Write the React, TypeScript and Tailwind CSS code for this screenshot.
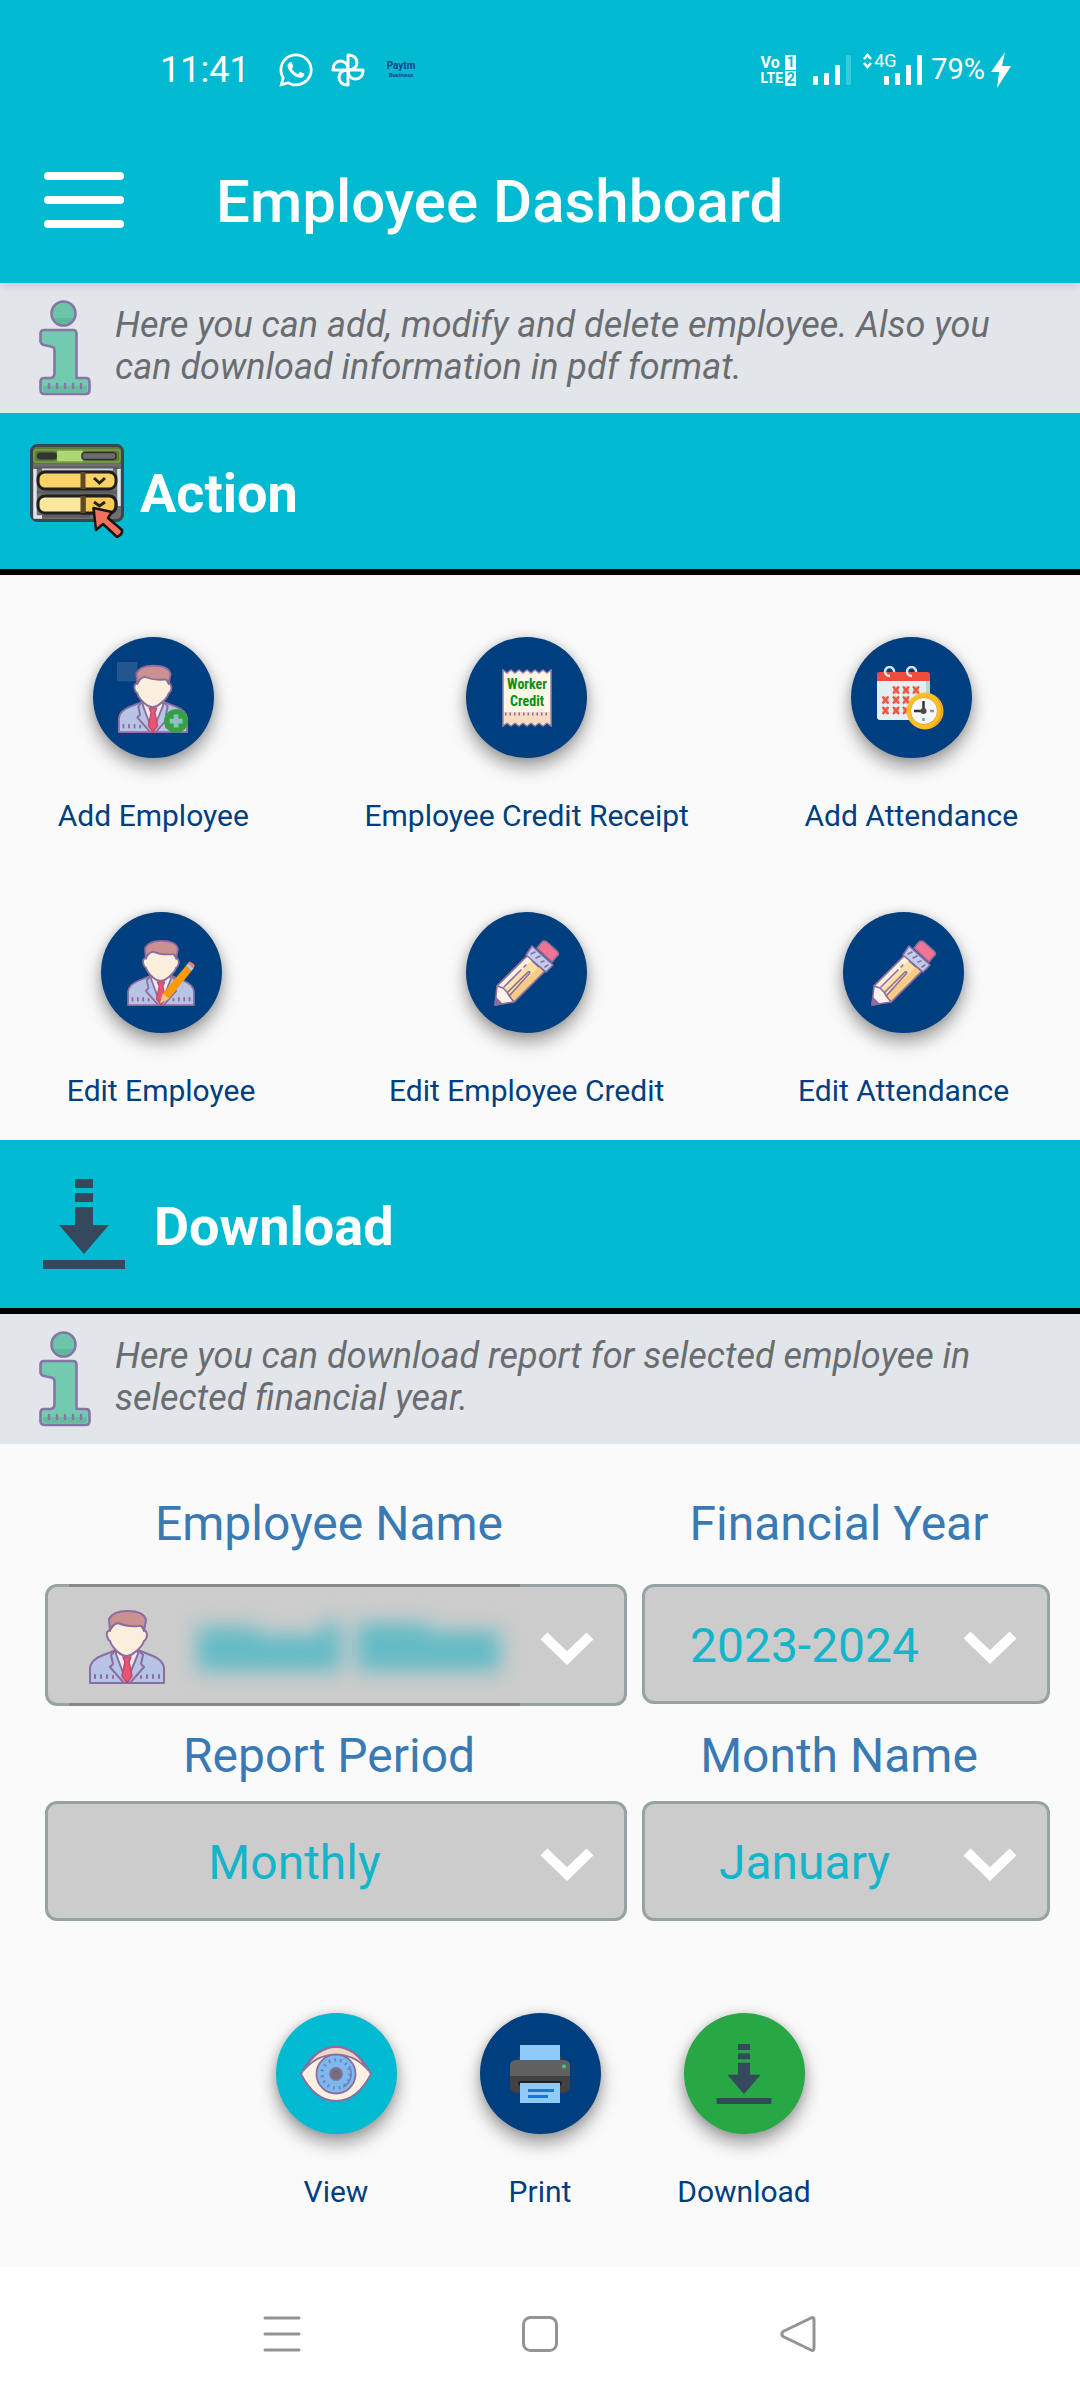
import type { ReactNode } from "react";
import { FaWhatsapp } from "react-icons/fa";

function PinwheelIcon() {
  return (
    <svg viewBox="0 0 34 34" className="size-[34px]" fill="none" stroke="#fff" strokeWidth="3" strokeLinejoin="round">
      {[0, 90, 180, 270].map((angle) => (
        <path key={angle} d="M17 2 H18 A8 7.5 0 0 1 18 17 H17 Z" transform={`rotate(${angle} 17 17)`} />
      ))}
    </svg>
  );
}

function BoltIcon() {
  return (
    <svg viewBox="0 0 20 36" className="h-9 w-5" fill="#fff">
      <path d="M14 0 L0 20 H8 L6 36 L20 14 H11 Z" />
    </svg>
  );
}

function SignalIcon({ faded }: { faded?: boolean }) {
  return (
    <svg viewBox="0 0 40 30" className="h-[30px] w-10" fill="#fff">
      <rect x="1" y="21" width="5" height="9" rx="1" />
      <rect x="12" y="18" width="5" height="12" rx="1" />
      <rect x="23" y="10" width="5" height="20" rx="1" />
      <rect x="34" y="0" width="5" height="30" rx="1" opacity={faded ? 0.22 : 1} />
    </svg>
  );
}

function InfoIcon() {
  return (
    <svg viewBox="0 0 52 96" className="h-24 w-[52px] shrink-0" stroke="#8676a4" strokeWidth="2.6" strokeLinejoin="round">
      <circle cx="24.5" cy="13.5" r="12" fill="#6cc5aa" />
      <path d="M15 18 A11 11 0 0 0 34 18 Z" fill="#5bb898" stroke="none" />
      <path
        d="M5 30 H34 Q37.500 30 37.500 34 V78 H47 Q50.500 78 50.500 82 V90 Q50.500 94 47 94 H5 Q1.500 94 1.500 90 V82 Q1.500 78 5 78 H11 Q15.500 78 15.500 73 V50 Q15.500 47 12 46.500 L5 45 Q1.500 44 1.500 41 V34 Q1.500 30 5 30 Z"
        fill="#72cbb0"
      />
      <path d="M4 86 H48 V89 Q48 92 45 92 H7 Q4 92 4 89 Z" fill="#62bd9f" stroke="none" />
      <path d="M10 84 V88 M18 84 V88 M26 84 V88 M34 84 V88 M42 84 V88" strokeWidth="2.500" strokeLinecap="round" />
    </svg>
  );
}

function ActionIcon() {
  return (
    <svg viewBox="0 0 95 94" className="h-[94px] w-[95px] shrink-0">
      <rect x="1.500" y="1.500" width="91" height="75" rx="6" fill="#6f6f6f" stroke="#37474a" strokeWidth="3" />
      <path d="M3 20 V7 Q3 3 7 3 H87 Q91 3 91 7 V20 H3 Z" fill="#5f7b3a" />
      <rect x="27" y="6" width="26" height="12" fill="#aed672" />
      <rect x="4" y="6" width="86" height="12" rx="3" fill="none" stroke="#7da04c" strokeWidth="1.500" />
      <rect x="7" y="8.500" width="20" height="7" rx="3" fill="#333" />
      <rect x="52" y="8.500" width="34" height="7" rx="3" fill="#6c6c6c" stroke="#333" strokeWidth="1.500" />
      <path d="M5 24 H89 M5 48 H89 M5 72 H60" stroke="#5c5c5c" strokeWidth="3" />
      <path d="M5 25 V73 H12 M89 25 V62" fill="none" stroke="#dfe3f2" strokeWidth="3.500" />
      <path d="M12 25.500 H83" stroke="#cfd3df" strokeWidth="2" />
      <g stroke="#1f1f1f" strokeWidth="3">
        <rect x="8" y="28" width="78" height="17" rx="7" fill="#fbd266" />
        <rect x="8" y="52" width="78" height="17" rx="7" fill="#fce69c" />
        <path d="M54 52 H79 Q86 52 86 60 Q86 69 79 69 H54 Z" fill="#f8cb58" />
      </g>
      <path d="M53 28 V45 M53 52 V69" stroke="#5d4b23" strokeWidth="5" />
      <path d="M64 34 L69.500 39 L75 34 M64 58 L69.500 62 L75 58" fill="none" stroke="#2c2410" strokeWidth="3" />
      <path
        d="M63.500 64 L82 68 L78 74 L92 86 Q93 90 87 93 L73 80 L66 86 Z"
        fill="#f2705c"
        stroke="#151515"
        strokeWidth="2.500"
        strokeLinejoin="round"
      />
    </svg>
  );
}

function DownloadIcon({ className }: { className: string }) {
  return (
    <svg viewBox="0 0 84 90" className={className} fill="#34495e">
      <rect x="33" y="0" width="18" height="9" />
      <rect x="33" y="14" width="18" height="9" />
      <path d="M33 28 H51 V46 H67 L42 75 L17 46 H33 Z" />
      <rect x="1" y="81" width="82" height="9" />
    </svg>
  );
}

function PersonArt() {
  return (
    <g stroke="#8b6d9f" strokeWidth="2" strokeLinejoin="round" strokeLinecap="round">
      <path d="M1 73 V58 Q2 50 12 46 L27 40 H49 L64 46 Q74 50 75 58 V73 Z" fill="#b7c4e6" />
      <path d="M28 38 L27 44 L37.500 72 L49 44 L48 38 Z" fill="#f4eaf0" />
      <path d="M34 47 H42 L40 52 L43 66 L38 73 L33 66 L36 52 Z" fill="#ea5573" stroke="#c2486d" strokeWidth="1.500" />
      <path d="M27 40 L22 45 L24 54 L21 57 L35 73 M49 40 L54 45 L52 54 L55 57 L41 73" fill="none" />
      <path d="M21 20 Q17 21 18 26 Q19 30 21 31 Q23 37 29 42 Q37.500 50 46 42 Q53 37 55 31 Q57 30 58 26 Q58 21 55 20 L50 13 H26 Z" fill="#fbeedd" />
      <path d="M21 21 L20 9 Q24 1 38 1 Q55 1 57 10 L55 21 Q54 15 50 16 Q38 17 29 13 Q22 15 21 21 Z" fill="#cb9191" />
      <path d="M6 65 V68 M12 65 V68 M18 65 V68 M24 66 V68 M52 66 V68 M58 65 V68 M64 65 V68 M70 65 V68" fill="none" />
    </g>
  );
}

function PersonIcon() {
  return (
    <svg viewBox="0 0 76 74" className="h-[74px] w-[76px]">
      <PersonArt />
    </svg>
  );
}

function AddPersonIcon() {
  return (
    <svg viewBox="0 0 78 78" className="size-[72px]">
      <rect x="0" y="0" width="22" height="21" fill="#235591" />
      <g transform="translate(1 3)">
        <PersonArt />
      </g>
      <circle cx="64" cy="64" r="13" fill="#36a047" />
      <path d="M64 57 V71 M57 64 H71" stroke="#8fc0c0" strokeWidth="5" />
    </svg>
  );
}

function EditPersonIcon() {
  return (
    <svg viewBox="0 0 76 74" className="h-[66px] w-[68px]">
      <PersonArt />
      <path d="M37 71 L40 60 L66 29 L72 35 L47 66 Z" fill="#fb9a0b" />
      <path d="M37 71 L40 60 L47 66 Z" fill="#f4c48a" />
      <path d="M66 29 L69 25.500 L75 31 L72 35 Z" fill="#b9ccd4" />
      <path d="M68 26 L70 24 Q75 26 76 29 L74 32 Z" fill="#ea8372" />
    </svg>
  );
}

function ReceiptIcon() {
  return (
    <svg viewBox="0 0 50 58" className="h-[58px] w-[50px]">
      <path
        d="M1 1 L5 4 L9 1 L13 4 L17 1 L21 4 L25 1 L29 4 L33 1 L37 4 L41 1 L45 4 L49 1 V57 L45 54 L41 57 L37 54 L33 57 L29 54 L25 57 L21 54 L17 57 L13 54 L9 57 L5 54 L1 57 Z"
        fill="#fdf5e6"
        stroke="#a07fa8"
        strokeWidth="1.500"
      />
      <path d="M2 43 H48 V55 L45 53 L41 56 L37 53 L33 56 L29 53 L25 56 L21 53 L17 56 L13 53 L9 56 L5 53 L2 55 Z" fill="#f6dcc3" />
      <path d="M3 45 H48" stroke="#8b6d9f" strokeWidth="3" strokeDasharray="1.5 3" />
      <g fill="#0b8f12" fontFamily="'Roboto Condensed', 'Liberation Sans Narrow', Roboto, sans-serif" fontWeight="700" fontSize="14" textAnchor="middle">
        <text x="25" y="20">Worker</text>
        <text x="25" y="37">Credit</text>
      </g>
    </svg>
  );
}

const CALENDAR_MARKS = [
  [19, 24], [29, 24], [39, 24],
  [8.5, 34], [19, 34], [29, 34],
  [8.5, 44.5], [19, 44.5], [29, 44.5],
];

function CalendarIcon() {
  return (
    <svg viewBox="0 0 68 64" className="h-16 w-[68px]">
      <rect x="0" y="7" width="53" height="47" rx="3" fill="#e3eff0" />
      <path d="M49 14 H53 V40 H49 Z" fill="#bcd3da" />
      <path d="M0 15 V9 Q0 6 3 6 H50 Q53 6 53 9 V15 Z" fill="#ee4d3b" />
      <path d="M13 10 A4.500 4.500 0 1 1 17 6 M35 10 A4.500 4.500 0 1 1 39 6" fill="none" stroke="#d5e3ea" strokeWidth="2.500" />
      {CALENDAR_MARKS.map(([x, y]) => (
        <g key={`${x}-${y}`}>
          <rect x={x - 3} y={y - 3.5} width="6" height="7" fill="#f4a79c" />
          <path d={`M${x - 3} ${y - 3.5} l6 7 m0 -7 l-6 7`} stroke="#ea5546" strokeWidth="2" />
        </g>
      ))}
      <circle cx="48" cy="45" r="18.500" fill="#fcc026" />
      <path d="M57 29 A18.500 18.500 0 0 1 50 63 A20 20 0 0 0 57 29 Z" fill="#f39a1e" />
      <circle cx="47" cy="45" r="13.500" fill="#f5f8fa" stroke="#f0a51f" strokeWidth="1" />
      <path d="M46.500 35 V45 H37" fill="none" stroke="#33363b" strokeWidth="2.500" />
      <circle cx="46.500" cy="45" r="3" fill="#4a4a48" />
      <path d="M53 45 H57 M46.500 52 V55" stroke="#8b9499" strokeWidth="2.500" />
    </svg>
  );
}

function PencilIcon() {
  return (
    <svg viewBox="0 0 66 66" className="size-[66px]" stroke="#8b6d9f" strokeWidth="1.600" strokeLinejoin="round" strokeLinecap="round">
      <path d="M3 46 L33 16 L50 32 L20 62 Z" fill="#fbe0a4" />
      <path d="M3 46 L33 16 L38 20 L9 51 Z" fill="#fdf0dc" stroke="none" />
      <path d="M14 57 L45 27 L50 32 L20 62 Z" fill="#f7cb85" stroke="none" />
      <path d="M3 46 L33 16 M20 62 L50 32" fill="none" />
      <path d="M3 46 L9 48 L13 52 L16 57 L20 62 L1 65 Z" fill="#fdf3ea" />
      <path d="M1 65 L2 58 L8 64 Z" fill="#8b6d9f" />
      <path d="M10 47 L27 30 M30 27 L32 25 M14 52 L34 32 Q37 31 35 34 L16 55" fill="none" />
      <path d="M32 15 L38 6 L59 25 L52 32 Z" fill="#c1cdee" />
      <path d="M37 14 L41 12 M42 18 L46 16 M47 22 L50 21 M51 27 L54 25" fill="none" />
      <path d="M43 8 L48 2 Q50 0 53 2 L63 11 Q66 14 63 16 L58 22 Z" fill="#f07493" />
    </svg>
  );
}

function EyeIcon() {
  return (
    <svg viewBox="0 0 72 56" className="h-14 w-[72px]" stroke="#8b6d9f" strokeWidth="1.800" strokeLinejoin="round">
      <path d="M1 28 Q15 1 36 1 Q57 1 71 28 Q57 55 36 55 Q15 55 1 28 Z" fill="#fbf0e2" />
      <path d="M4 24 Q17 1 36 1 Q55 1 68 24 Q54 8 36 9 Q18 8 4 24 Z" fill="#eed6c4" />
      <circle cx="36" cy="28" r="19.500" fill="#7db8ee" />
      <circle cx="36" cy="28" r="14" fill="none" stroke="#6c86bd" strokeWidth="3.500" strokeDasharray="1.800 4" />
      <path d="M49 20 A15 15 0 0 1 43 41" fill="none" stroke="#7583b9" />
      <circle cx="36" cy="28" r="6" fill="#6f6f77" />
    </svg>
  );
}

function PrinterIcon() {
  return (
    <svg viewBox="0 0 60 58" className="h-[58px] w-[60px]">
      <rect x="8" y="11" width="44" height="8" rx="2" fill="#424242" />
      <rect x="10" y="0" width="40" height="16" fill="#90caf9" />
      <rect x="0" y="15" width="60" height="33" rx="6" fill="#424242" />
      <path d="M0 31 V21 Q0 15 6 15 H54 Q60 15 60 21 V31 Z" fill="#616161" />
      <rect x="8" y="36" width="44" height="5" rx="2" fill="#212121" />
      <circle cx="54" cy="21.500" r="2" fill="#3ecb7c" />
      <rect x="10" y="38" width="40" height="20" fill="#90caf9" />
      <path d="M18 45.500 H44 M18 51.500 H38" stroke="#1976d2" strokeWidth="3" />
    </svg>
  );
}

function ChevronIcon() {
  return (
    <svg
      viewBox="0 0 56 34"
      className="pointer-events-none absolute inset-y-0 right-8 mt-1 h-full w-14"
      fill="none"
      stroke="#fff"
      strokeWidth="10"
    >
      <path d="M5 4 L28 26 L51 4" />
    </svg>
  );
}

function StatusBar() {
  return (
    <div className="flex h-[116px] items-center justify-between pl-40 pr-[69px] pt-6 text-white">
      <div className="flex items-center">
        <span className="w-[117px] text-4xl">11:41</span>
        <FaWhatsapp className="size-[38px]" />
        <span className="ml-4">
          <PinwheelIcon />
        </span>
        <span className="ml-[22px] flex w-7 flex-col items-center font-bold text-[#17418a]">
          <span className="text-[10px] leading-[10px]">Paytm</span>
          <span className="text-[6px] leading-[8px]">Business</span>
        </span>
      </div>
      <div className="flex items-center">
        <span className="grid grid-cols-[auto_11px] items-center gap-x-0.5 gap-y-px text-base font-bold leading-[15px]">
          <span>Vo</span>
          <span className="bg-white text-center text-sm leading-[15px] text-[#00bad1]">1</span>
          <span className="text-sm leading-[15px]">LTE</span>
          <span className="bg-white text-center text-sm leading-[15px] text-[#00bad1]">2</span>
        </span>
        <span className="ml-4">
          <SignalIcon faded />
        </span>
        <span className="relative ml-[31px]">
          <SignalIcon />
          <span className="absolute -left-5 -top-1 flex items-center gap-0.5 text-lg leading-5">
            <svg viewBox="0 0 9 16" className="h-4 w-[9px]" fill="none" stroke="#fff" strokeWidth="2.500">
              <path d="M1 6 L4.500 2 L8 6 M1 10 L4.500 14 L8 10" />
            </svg>
            4G
          </span>
        </span>
        <span className="ml-2 text-[29px]">79%</span>
        <span className="ml-1.5">
          <BoltIcon />
        </span>
      </div>
    </div>
  );
}

function InfoBanner({ children }: { children: ReactNode }) {
  return (
    <div className="flex min-h-[130px] items-center gap-6 bg-[#e2e5ea] pl-[39px] pr-10">
      <InfoIcon />
      <p className="pb-1 text-4xl leading-[42px] text-[#6a6d70] italic">{children}</p>
    </div>
  );
}

function RoundAction({ label, tone, children }: { label: string; tone: string; children: ReactNode }) {
  return (
    <button type="button" className="flex flex-col items-center gap-10 text-3xl leading-9 text-[#003f7f]">
      <span
        className={`flex size-[121px] items-center justify-center rounded-full shadow-[0_9px_18px_rgba(0,0,0,0.38),0_0_8px_rgba(0,0,0,0.12)] ${tone}`}
      >
        {children}
      </span>
      {label}
    </button>
  );
}

function Field({
  id,
  label,
  gap,
  children,
}: {
  id: string;
  label: string;
  gap: string;
  children: ReactNode;
}) {
  return (
    <div className={`flex flex-col ${gap}`}>
      <label htmlFor={id} className="pr-3.5 text-center text-5xl leading-[56px] text-[#3a7ab4]">
        {label}
      </label>
      <div className="relative">
        {children}
        <ChevronIcon />
      </div>
    </div>
  );
}

const SELECT_CLASS =
  "block h-[120px] w-full appearance-none rounded-xl border-3 border-[#95a3a3] bg-[#cccccc] pr-[83px] pt-1 text-center text-5xl leading-[72px] text-[#12b5c9] [text-align-last:center]";

const NAVY = "bg-[#003f7f]";

export default function App() {
  return (
    <div className="flex min-h-screen flex-col bg-[#fafafa] font-[Roboto,sans-serif]">
      <header className="relative z-10 bg-[#00bad1] shadow-[0_3px_8px_rgba(0,0,0,0.12)]">
        <StatusBar />
        <div className="flex h-[167px] items-center pl-11">
          <button type="button" aria-label="Menu" className="flex w-20 flex-col gap-4">
            <span className="h-2 rounded-full bg-white" />
            <span className="h-2 rounded-full bg-white" />
            <span className="h-2 rounded-full bg-white" />
          </button>
          <h1 className="pl-[92px] pt-1 text-6xl font-medium text-white">Employee Dashboard</h1>
        </div>
      </header>

      <main className="flex-1">
        <InfoBanner>
          Here you can add, modify and delete employee. Also you can download information in pdf format.
        </InfoBanner>

        <section>
          <div className="flex h-[162px] items-center gap-[15px] border-b-[6px] border-black bg-[#00bad1] pl-[30px]">
            <ActionIcon />
            <h2 className="pt-1 text-[54px] font-bold text-white">Action</h2>
          </div>
          <div className="flex flex-col gap-[78px] pb-[31px] pr-1 pt-[62px]">
            <div className="flex justify-around">
              <RoundAction label="Add Employee" tone={NAVY}>
                <AddPersonIcon />
              </RoundAction>
              <RoundAction label="Employee Credit Receipt" tone={NAVY}>
                <ReceiptIcon />
              </RoundAction>
              <RoundAction label="Add Attendance" tone={NAVY}>
                <CalendarIcon />
              </RoundAction>
            </div>
            <div className="flex justify-around">
              <RoundAction label="Edit Employee" tone={NAVY}>
                <EditPersonIcon />
              </RoundAction>
              <RoundAction label="Edit Employee Credit" tone={NAVY}>
                <PencilIcon />
              </RoundAction>
              <RoundAction label="Edit Attendance" tone={NAVY}>
                <PencilIcon />
              </RoundAction>
            </div>
          </div>
        </section>

        <section>
          <div className="flex h-[174px] items-center gap-7 border-b-[6px] border-black bg-[#00bad1] pl-[42px]">
            <DownloadIcon className="h-[90px] w-[84px]" />
            <h2 className="pt-1 text-[54px] font-bold text-white">Download</h2>
          </div>
          <InfoBanner>Here you can download report for selected employee in selected financial year.</InfoBanner>

          <form className="pl-[45px] pr-[30px] pt-[52px]">
            <div className="grid grid-cols-[582fr_408fr] items-start gap-x-[15px]">
              <Field id="employee" label="Employee Name" gap="gap-8">
                <select
                  id="employee"
                  className="block h-[122px] w-full appearance-none rounded-xl border-3 border-[#95a3a3] bg-[#cccccc]"
                >
                  <option value="" aria-label="Selected employee" />
                </select>
                <div className="pointer-events-none absolute inset-y-0 left-6 right-[107px] flex items-center border-y-3 border-[#888888] pl-5 pt-1">
                  <PersonIcon />
                  <span className="ml-8 flex flex-1 items-center gap-4 pr-5 blur-[10px]">
                    <span className="flex flex-1 items-end">
                      <span className="h-11 flex-1 bg-[#64bbc6]" />
                      <span className="h-9 flex-1 bg-[#64bbc6]" />
                      <span className="h-12 w-5 bg-[#64bbc6]" />
                    </span>
                    <span className="flex flex-1 items-end">
                      <span className="h-12 flex-1 bg-[#64bbc6]" />
                      <span className="h-10 flex-1 bg-[#64bbc6]" />
                    </span>
                  </span>
                </div>
              </Field>
              <Field id="year" label="Financial Year" gap="gap-8">
                <select id="year" className={SELECT_CLASS}>
                  <option>2023-2024</option>
                </select>
              </Field>
            </div>
            <div className="mt-[22px] grid grid-cols-[582fr_408fr] items-start gap-x-[15px]">
              <Field id="period" label="Report Period" gap="gap-[17px]">
                <select id="period" className={SELECT_CLASS}>
                  <option>Monthly</option>
                </select>
              </Field>
              <Field id="month" label="Month Name" gap="gap-[17px]">
                <select id="month" className={SELECT_CLASS}>
                  <option>January</option>
                </select>
              </Field>
            </div>
          </form>

          <div className="mx-auto grid max-w-[612px] grid-cols-3 pb-[57px] pt-[92px]">
            <RoundAction label="View" tone="bg-[#00bad1]">
              <EyeIcon />
            </RoundAction>
            <RoundAction label="Print" tone={NAVY}>
              <PrinterIcon />
            </RoundAction>
            <RoundAction label="Download" tone="bg-[#28a745]">
              <DownloadIcon className="h-[60px] w-14" />
            </RoundAction>
          </div>
        </section>
      </main>

      <nav className="flex h-[133px] items-center justify-center gap-[220px] bg-white text-[#949494]">
        <button type="button" aria-label="Recent apps">
          <svg viewBox="0 0 38 38" className="size-[38px]" stroke="currentColor" strokeWidth="3" strokeLinecap="round">
            <path d="M2 3 H36 M2 19 H36 M2 35 H36" />
          </svg>
        </button>
        <button type="button" aria-label="Home">
          <svg viewBox="0 0 38 38" className="size-[38px]" fill="none" stroke="currentColor" strokeWidth="3">
            <rect x="2.500" y="2.500" width="33" height="33" rx="7" />
          </svg>
        </button>
        <button type="button" aria-label="Back">
          <svg viewBox="0 0 38 38" className="size-[38px]" fill="none" stroke="currentColor" strokeWidth="3" strokeLinejoin="round">
            <path d="M32 3 Q35 1.500 35 5 V33 Q35 36.500 32 35 L4 21.500 Q1.500 19 4 16.500 Z" />
          </svg>
        </button>
      </nav>
    </div>
  );
}
